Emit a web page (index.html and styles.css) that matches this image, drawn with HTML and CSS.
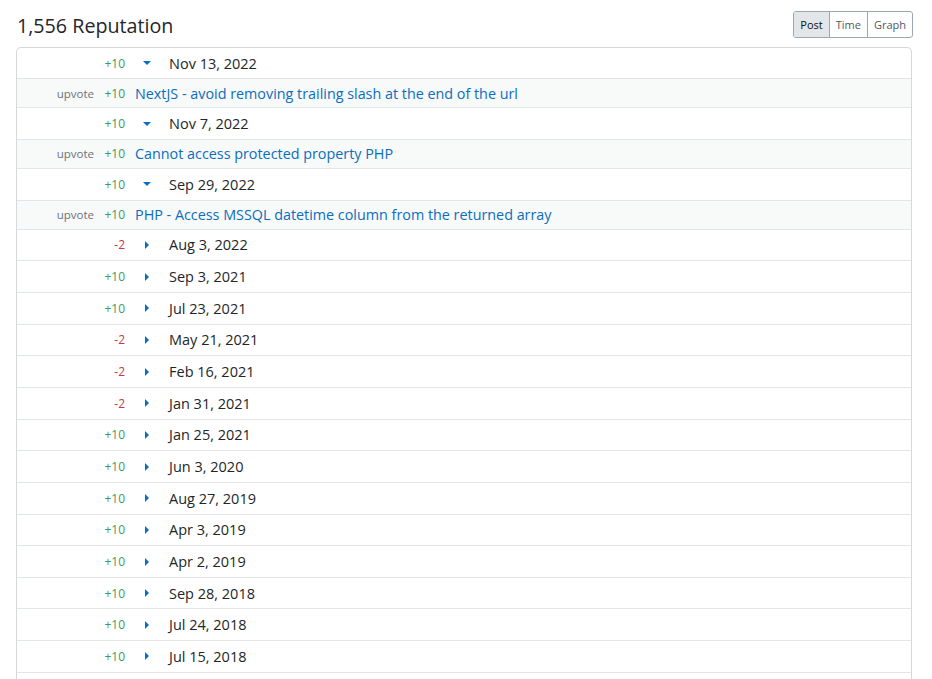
FILE: index.html
```html
<!DOCTYPE html>
<html>
<head>
<meta charset="utf-8">
<link rel="stylesheet" href="styles.css">
</head>
<body>
<div class="page">
  <div class="header">
    <h1 class="title">1,556 Reputation</h1>
    <div class="tabs">
      <span class="tab active">Post</span><span class="tab">Time</span><span class="tab">Graph</span>
    </div>
  </div>
  <div class="table">
    <div class="row day first"><span class="type"></span><span class="amt pos">+10</span><span class="tog"><span class="down"></span></span><span class="date">Nov 13, 2022</span></div>
    <div class="row detail"><span class="type">upvote</span><span class="amt pos">+10</span><a class="link">NextJS - avoid removing trailing slash at the end of the url</a></div>
    <div class="row day"><span class="type"></span><span class="amt pos">+10</span><span class="tog"><span class="down"></span></span><span class="date">Nov 7, 2022</span></div>
    <div class="row detail"><span class="type">upvote</span><span class="amt pos">+10</span><a class="link">Cannot access protected property PHP</a></div>
    <div class="row day"><span class="type"></span><span class="amt pos">+10</span><span class="tog"><span class="down"></span></span><span class="date">Sep 29, 2022</span></div>
    <div class="row detail"><span class="type">upvote</span><span class="amt pos">+10</span><a class="link">PHP - Access MSSQL datetime column from the returned array</a></div>
    <div class="row day"><span class="type"></span><span class="amt neg">-2</span><span class="tog"><span class="right"></span></span><span class="date">Aug 3, 2022</span></div>
    <div class="row day"><span class="type"></span><span class="amt pos">+10</span><span class="tog"><span class="right"></span></span><span class="date">Sep 3, 2021</span></div>
    <div class="row day"><span class="type"></span><span class="amt pos">+10</span><span class="tog"><span class="right"></span></span><span class="date">Jul 23, 2021</span></div>
    <div class="row day"><span class="type"></span><span class="amt neg">-2</span><span class="tog"><span class="right"></span></span><span class="date">May 21, 2021</span></div>
    <div class="row day"><span class="type"></span><span class="amt neg">-2</span><span class="tog"><span class="right"></span></span><span class="date">Feb 16, 2021</span></div>
    <div class="row day"><span class="type"></span><span class="amt neg">-2</span><span class="tog"><span class="right"></span></span><span class="date">Jan 31, 2021</span></div>
    <div class="row day"><span class="type"></span><span class="amt pos">+10</span><span class="tog"><span class="right"></span></span><span class="date">Jan 25, 2021</span></div>
    <div class="row day"><span class="type"></span><span class="amt pos">+10</span><span class="tog"><span class="right"></span></span><span class="date">Jun 3, 2020</span></div>
    <div class="row day"><span class="type"></span><span class="amt pos">+10</span><span class="tog"><span class="right"></span></span><span class="date">Aug 27, 2019</span></div>
    <div class="row day"><span class="type"></span><span class="amt pos">+10</span><span class="tog"><span class="right"></span></span><span class="date">Apr 3, 2019</span></div>
    <div class="row day"><span class="type"></span><span class="amt pos">+10</span><span class="tog"><span class="right"></span></span><span class="date">Apr 2, 2019</span></div>
    <div class="row day"><span class="type"></span><span class="amt pos">+10</span><span class="tog"><span class="right"></span></span><span class="date">Sep 28, 2018</span></div>
    <div class="row day"><span class="type"></span><span class="amt pos">+10</span><span class="tog"><span class="right"></span></span><span class="date">Jul 24, 2018</span></div>
    <div class="row day"><span class="type"></span><span class="amt pos">+10</span><span class="tog"><span class="right"></span></span><span class="date">Jul 15, 2018</span></div>
    <div class="row day"></div>
  </div>
</div>
</body>
</html>
```
FILE: styles.css
```css
* { box-sizing: border-box; }
html, body { margin: 0; padding: 0; background: #fff; }
body {
  font-family: "Open Sans", "Noto Sans", sans-serif;
  color: #232629;
  overflow: hidden;
  height: 679px;
}
.page { padding: 0 20px 0 16px; }
.header {
  display: flex;
  justify-content: space-between;
  align-items: flex-start;
  height: 47px;
  padding-top: 11px;
}
.title {
  margin: 0;
  font-weight: 400;
  font-size: 19.7px;
  line-height: 30px;
  padding-left: 1px;
  color: #232629;
}
.tabs {
  display: flex;
  border: 1px solid #9fa6ad;
  border-radius: 3px;
  overflow: hidden;
  margin-right: -1px;
}
.tab {
  font-size: 11px;
  color: #525960;
  height: 25px;
  line-height: 25px;
  padding: 0 6px;
  border-left: 1px solid #9fa6ad;
}
.tab:first-child { border-left: none; }
.tab.active { background: #e3e6e8; color: #0c0d0e; }
.table {
  border: 1px solid #d6d9dc;
  border-radius: 5px;
  border-bottom: none;
}
.row {
  display: flex;
  align-items: center;
  border-bottom: 1px solid #e3e6e8;
}
.row.day { height: 31.67px; }
.row.day.first { height: 31.3px; }
.row.detail { height: 29px; background: #f8f9f9; }
.type {
  width: 77px;
  text-align: right;
  font-size: 11.5px;
  color: #6a737c;
}
.amt {
  width: 31px;
  text-align: right;
  font-size: 12px;
}
.amt.pos { color: #3b9c5c; }
.amt.neg { color: #d1383d; }
.tog {
  width: 44px;
  display: flex;
  justify-content: center;
}
.down {
  width: 0; height: 0;
  border-left: 4px solid transparent;
  border-right: 4px solid transparent;
  border-top: 4px solid #0a6ec0;
}
.right {
  width: 0; height: 0;
  border-top: 4px solid transparent;
  border-bottom: 4px solid transparent;
  border-left: 4px solid #0a6ec0;
}
.date { font-size: 14.5px; color: #232629; }
.link {
  margin-left: 10px;
  font-size: 14.35px;
  color: #0a6ec0;
  text-decoration: none;
}
```
